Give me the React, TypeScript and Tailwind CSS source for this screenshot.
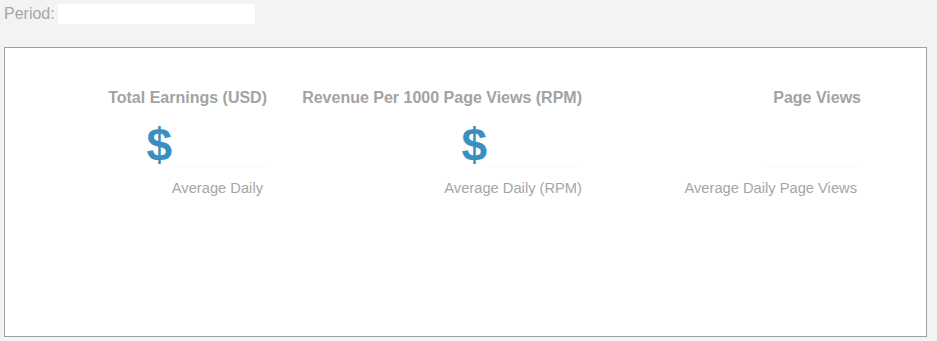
import React from 'react';

type Stat = {
  title: string;
  sub: string;
  width: string;
  currency: boolean;
  subOffset: string;
};

const stats: Stat[] = [
  { title: 'Total Earnings (USD)', sub: 'Average Daily', width: 'w-[262px]', currency: true, subOffset: 'pr-1' },
  { title: 'Revenue Per 1000 Page Views (RPM)', sub: 'Average Daily (RPM)', width: 'w-[315px]', currency: true, subOffset: 'pr-0' },
  { title: 'Page Views', sub: 'Average Daily Page Views', width: 'w-[279px]', currency: false, subOffset: 'pr-1' },
];

const StatColumn: React.FC<{ stat: Stat }> = ({ stat }) => (
  <div className={`${stat.width} flex flex-col items-end text-right`}>
    <h3 className="text-[16px] leading-[18px] font-bold text-[#a3a3a3]">{stat.title}</h3>
    <div className="flex items-end h-[48px] mt-[13px]">
      {stat.currency && (
        <span className="text-[46px] leading-[46px] font-bold text-[#3b8fc0]">$</span>
      )}
      <div className="w-[95px] h-[40px] border-b border-[#fbfbf5]" />
    </div>
    <p className={`${stat.subOffset} mt-[11px] text-[14.7px] leading-[18px] text-[#a6a6a6]`}>{stat.sub}</p>
  </div>
);

export default function App() {
  return (
    <div
      className="w-[937px] h-[341px] bg-[#f3f3f3] pl-[4px] pt-[4px]"
      style={{ fontFamily: '"Liberation Sans", Arial, sans-serif' }}
    >
      {/* Period selector */}
      <div className="flex items-center h-[20px] gap-[3px]">
        <span className="text-[16px] text-[#a6a6a6]">Period:</span>
        <div className="w-[197px] h-[20px] bg-white" />
      </div>

      {/* Stats panel */}
      <div className="mt-[23px] w-[923px] h-[290px] bg-white border border-[#a0a0a0] pt-[41px]">
        <div className="flex">
          {stats.map((s) => (
            <StatColumn key={s.title} stat={s} />
          ))}
        </div>
      </div>
    </div>
  );
}
